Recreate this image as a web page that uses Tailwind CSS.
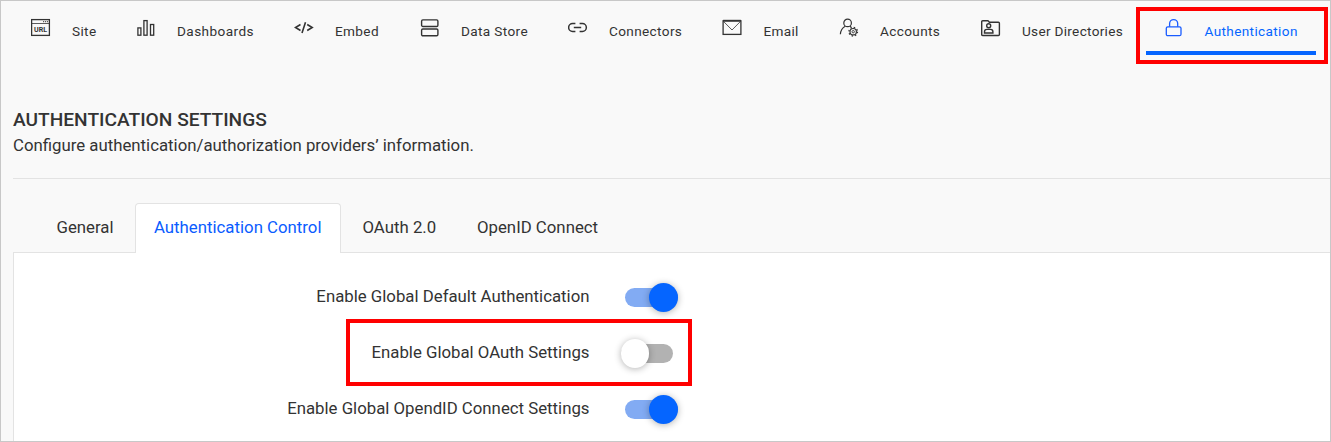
<!DOCTYPE html>
<html lang="en">
<head>
<meta charset="utf-8">
<title>Authentication Settings</title>
<script src="https://cdn.jsdelivr.net/npm/@tailwindcss/browser@4"></script>
</head>
<body class="font-[Roboto,sans-serif] text-[#333]">
<div class="relative flex h-[442px] w-[1331px] flex-col overflow-hidden border border-[#c8c8c8] bg-[#f9f9f9]">

  <nav class="flex h-[54px] shrink-0 items-start pt-[17px] pl-[30px] text-[13.6px] leading-5 tracking-[0.36px] whitespace-nowrap">
    <a class="flex w-[105px] shrink-0 gap-[21px]">
      <svg class="size-5 shrink-0" viewBox="0 0 20 20" fill="none" stroke="#333" stroke-width="1.3"><rect x=".6" y="1.6" width="17.8" height="15.8"/><path d="M.6 5.5h17.8" stroke-width=".8"/><path d="M12 3.7h5" stroke-dasharray="1.2 .8" stroke-width="1"/><text x="3" y="14.1" font-size="7" font-weight="700" fill="#333" stroke="none" letter-spacing="0" textLength="13" lengthAdjust="spacingAndGlyphs">URL</text></svg>
      <span class="mt-[3px]">Site</span>
    </a>
    <a class="flex w-[158px] shrink-0 gap-[21px]">
      <svg class="size-5 shrink-0" viewBox="0 0 20 20" fill="none" stroke="#333" stroke-width="1.3"><rect x="1.9" y="9.9" width="3" height="7.3"/><rect x="7.9" y="2.6" width="3.2" height="14.6"/><rect x="14.5" y="6.5" width="3.2" height="10.7"/></svg>
      <span class="mt-[3px] tracking-[0.42px]">Dashboards</span>
    </a>
    <a class="flex w-[126px] shrink-0 gap-[21px]">
      <svg class="size-5 shrink-0" viewBox="0 0 20 20" fill="none" stroke="#333" stroke-width="1.6"><path d="M6.5 6.5 1.5 9.5l5 3M13.2 6.5l5 3-5 3M11.5 4.2 8 15"/></svg>
      <span class="mt-[3px]">Embed</span>
    </a>
    <a class="flex w-[148px] shrink-0 gap-[21px]">
      <svg class="size-5 shrink-0" viewBox="0 0 20 20" fill="none" stroke="#333" stroke-width="1.4"><rect x="1.6" y="1.9" width="16.3" height="6.6" rx="1.3"/><rect x="1.6" y="11" width="16.3" height="6.8" rx="1.3"/></svg>
      <span class="mt-[3px]">Data Store</span>
    </a>
    <a class="flex w-[154px] shrink-0 gap-[21px]">
      <svg class="size-5 shrink-0" viewBox="0 0 20 20" fill="none" stroke="#333" stroke-width="1.5"><path d="M7.4 5.6H4.6a3.9 3.9 0 0 0 0 7.9h2.8M11.6 5.6h2.8a3.9 3.9 0 0 1 0 7.9h-2.8M5.8 9.5h7.4"/></svg>
      <span class="mt-[3px]">Connectors</span>
    </a>
    <a class="flex w-[117px] shrink-0 gap-[21px]">
      <svg class="size-5 shrink-0" viewBox="0 0 20 20" fill="none" stroke="#333" stroke-width="1.3"><rect x="1.1" y="2.8" width="17.8" height="13.6"/><path d="M1.1 2.7h17.8" stroke-width="1.8"/><path d="m1.7 3.6 8.3 8.4 8.3-8.4" stroke-width=".8"/></svg>
      <span class="mt-[3px] ml-[0.5px] tracking-[0.3px]">Email</span>
    </a>
    <a class="flex w-[142px] shrink-0 gap-[21px]">
      <svg class="size-5 shrink-0" viewBox="0 0 20 20" fill="none" stroke="#333" stroke-width="1.2"><circle cx="8.6" cy="4.9" r="3.8"/><path d="M1.4 16.3c.2-3.7 1.7-6.5 4.9-8.1M11 8.2l1.2.8"/><circle cx="14.2" cy="13.7" r="3.2"/><circle cx="14.2" cy="13.7" r="1.2" stroke-width=".9"/><circle cx="14.2" cy="13.7" r="4.3" stroke-width="1.3" stroke-dasharray="1.5 1.877"/></svg>
      <span class="mt-[3px]">Accounts</span>
    </a>
    <a class="flex w-[183px] shrink-0 gap-[21px]">
      <svg class="size-5 shrink-0" viewBox="0 0 20 20" fill="none" stroke="#333" stroke-width="1.4"><path d="M.7 16.5V3.7q0-1 1-1h4.9q.7 0 1.1.6l.6.9h9.1q1 0 1 1V16.5q0 1-1 1H1.7q-1 0-1-1Z"/><circle cx="7.7" cy="7.8" r="2"/><path d="M3.5 15v-1.3q0-2.3 2.3-2.3h3.8q2.3 0 2.3 2.3V15Z"/></svg>
      <span class="mt-[3px] tracking-[0.3px]">User Directories</span>
    </a>
    <a class="flex shrink-0 gap-[21px] text-[#0565ff]">
      <svg class="size-5 shrink-0" viewBox="0 0 20 20" fill="none" stroke="#1a5cff" stroke-width="1.3"><rect x="2.3" y="8.8" width="14.7" height="8.9" rx="1.5"/><path d="M5.6 8.8V5.6a4 4 0 0 1 8.1 0v3.2"/></svg>
      <span class="mt-[3px] ml-[-0.5px]">Authentication</span>
    </a>
  </nav>

  <header class="ml-3 flex h-[124px] shrink-0 flex-col border-b border-[#e3e3e3] pt-[53px]">
    <h1 class="text-[19.15px] leading-6 font-medium">AUTHENTICATION SETTINGS</h1>
    <p class="mt-px text-[16.8px] leading-6">Configure authentication/authorization providers’ information.</p>
  </header>

  <div class="ml-3 flex h-[74px] shrink-0 text-[16.8px] leading-[48px] whitespace-nowrap">
    <div class="mt-6 w-[122px] border-b border-[#e3e3e3] pl-[43.5px]">General</div>
    <div class="mt-6 w-[206px] rounded-t-[4px] border border-b-0 border-[#e3e3e3] bg-white pl-[18px] leading-[46px] text-[#0a5cff]">Authentication Control</div>
    <div class="mt-6 flex flex-1 border-b border-[#e3e3e3] pl-[21.5px]"><span class="w-[114.5px]">OAuth 2.0</span><span>OpenID Connect</span></div>
  </div>

  <main class="ml-3 flex flex-1 flex-col border-l border-[#e3e3e3] bg-white pt-[15px] text-[16.8px]">
    <div class="flex h-14 shrink-0 items-center">
      <span class="mt-[2px] w-[575.5px] text-right">Enable Global Default Authentication</span>
      <span class="mt-[2px] ml-[35.5px] flex h-[19px] w-[53px] items-center justify-end rounded-full bg-[#82abf3]"><i class="size-[29px] shrink-0 rounded-full bg-[#0565ff] shadow-[0_1px_7px_rgba(0,0,0,0.3)]"></i></span>
    </div>
    <div class="flex h-14 shrink-0 items-center">
      <span class="mt-[2px] w-[575.5px] text-right">Enable Global OAuth Settings</span>
      <span class="mt-[2px] ml-[31px] flex h-[19px] w-[52.5px] items-center rounded-full bg-[#b2b2b2]"><i class="h-[29px] w-[28.5px] shrink-0 rounded-full bg-white shadow-[0_1px_7px_rgba(0,0,0,0.3)]"></i></span>
    </div>
    <div class="flex h-14 shrink-0 items-center">
      <span class="mt-[2px] w-[575.5px] text-right">Enable Global OpendID Connect Settings</span>
      <span class="mt-[2px] ml-[35.5px] flex h-[19px] w-[53px] items-center justify-end rounded-full bg-[#82abf3]"><i class="size-[29px] shrink-0 rounded-full bg-[#0565ff] shadow-[0_1px_7px_rgba(0,0,0,0.3)]"></i></span>
    </div>
  </main>

  <!-- Active-tab underline and callout frames -->
  <div class="absolute top-[50px] left-[1145px] h-1 w-[170px] bg-[#0565ff]"></div>
  <div class="absolute top-[6px] left-[1135px] h-[57px] w-[192px] border-4 border-[#ff0000]"></div>
  <div class="absolute top-[318px] left-[345px] h-[67px] w-[346px] border-4 border-[#ff0000]"></div>
</div>
</body>
</html>
